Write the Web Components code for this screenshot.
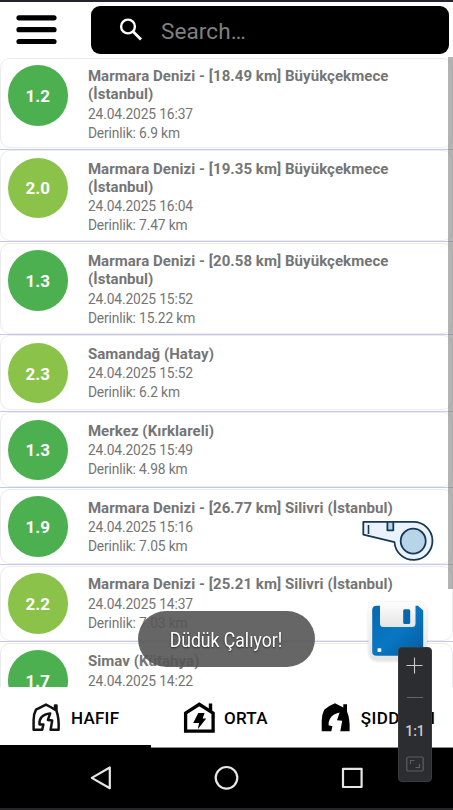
<!DOCTYPE html>
<html lang="tr">
<head>
<meta charset="utf-8">
<title>Depremler</title>
<style>
html,body{margin:0;height:100%;overflow:hidden;background:#fff}
body{font-family:Roboto,"Noto Sans",sans-serif}
</style>
</head>
<body>
<quake-app></quake-app>
<script>
const define = (name, html, init) => customElements.define(name, class extends HTMLElement {
  constructor() {
    super();
    const t = document.createElement('template');
    t.innerHTML = html;
    this.attachShadow({mode: 'open'}).append(t.content.cloneNode(true));
  }
  connectedCallback() { if (init) init(this, this.shadowRoot); }
});

define('top-bar', `<style>
:host{display:flex;box-sizing:border-box;height:57px;border-top:2px solid #25242b;padding:4px 4px 0 16px;background:#fff}
.menu{width:41px;height:48px;margin-right:34px;display:block}
.search{flex:1;height:48px;border-radius:9px;background:#000;display:flex;align-items:center;color:#808080;font-size:22.5px}
.search svg{width:24px;height:24px;margin:0 18px 0 28px}
.search span{position:relative;top:1px;letter-spacing:.1px}
</style>
<svg class="menu" viewBox="0 0 41 48"><path d="M3 11.8H38M3 23.7H38M3 35.5H38" stroke="#000" stroke-width="5.2" stroke-linecap="round"/></svg>
<div class="search"><svg viewBox="0 0 24 24" fill="none" stroke="#fff" stroke-width="2.4"><circle cx="9" cy="8.5" r="6.9"/><path d="M14 13.5L22 21.5" stroke-width="2.8"/></svg><span>Search…</span></div>`);

define('quake-row', `<style>
:host{display:flex;box-sizing:border-box;height:76.8px;border-bottom:1px solid #c3c9e8;padding-top:.6px}
.card{flex:1;box-sizing:border-box;height:75px;border:1.3px solid #ececee;border-radius:10px;display:flex;padding:6.5px 0 0 6.6px}
:host([tall]){height:92.6px}
:host([tall]) .card{height:90.8px}
.badge{flex:none;width:60.5px;height:60.5px;border-radius:50%;background:#4caf50;color:#fff;font-weight:700;font-size:17px;display:flex;align-items:center;justify-content:center;margin-right:19.8px;line-height:1}
.badge span{position:relative;top:1px;letter-spacing:.1px}
:host([lime]) .badge{background:#8bc34a}
.info{color:#757575;font-size:13.8px;line-height:19px;padding-top:2.1px;white-space:nowrap}
.meta{letter-spacing:-.13px}
.title{font-weight:700;font-size:15px;letter-spacing:.06px;line-height:18px;margin-bottom:1.5px;white-space:pre-line}
</style>
<div class="card"><div class="badge"><span><slot name="mag"></slot></span></div><div class="info"><div class="title"><slot></slot></div><div class="meta"><slot name="date"></slot></div><div class="meta"><slot name="depth"></slot></div></div></div>`);

define('quake-list', `<style>
:host{display:block;height:630px;overflow:hidden;position:relative;background:#fff}
.bar{position:absolute;right:0;top:0;width:5px;height:532px;background:rgba(120,120,120,.56)}
</style><div class="rows"></div><div class="bar"></div>`, (el, root) => {
  const data = [
    ['1.2', 'Marmara Denizi - [18.49 km] Büyükçekmece\n(İstanbul)', '16:37', '6.9', 0],
    ['2.0', 'Marmara Denizi - [19.35 km] Büyükçekmece\n(İstanbul)', '16:04', '7.47', 1],
    ['1.3', 'Marmara Denizi - [20.58 km] Büyükçekmece\n(İstanbul)', '15:52', '15.22', 0],
    ['2.3', 'Samandağ (Hatay)', '15:52', '6.2', 1],
    ['1.3', 'Merkez (Kırklareli)', '15:49', '4.98', 0],
    ['1.9', 'Marmara Denizi - [26.77 km] Silivri (İstanbul)', '15:16', '7.05', 0],
    ['2.2', 'Marmara Denizi - [25.21 km] Silivri (İstanbul)', '14:37', '7.03', 1],
    ['1.7', 'Simav (Kütahya)', '14:22', '', 0]
  ];
  root.querySelector('.rows').innerHTML = data.map(([m, t, h, d, lime]) =>
    `<quake-row ${lime ? 'lime' : ''} ${t.includes('\n') ? 'tall' : ''}><span slot="mag">${m}</span>${t}<span slot="date">24.04.2025 ${h}</span>${d ? `<span slot="depth">Derinlik: ${d} km</span>` : ''}</quake-row>`).join('');
});

define('tab-item', `<style>
:host{display:flex;box-sizing:border-box;width:151px;height:61px;align-items:center;border-bottom:1px solid #8c8c8c;font-size:17px;font-weight:500;letter-spacing:.25px;color:#000;white-space:nowrap}
:host([active]){border-bottom:3px solid #000;}
::slotted(svg){width:32px;height:32px;flex:none}
.label{margin-left:9px;position:relative;top:.5px}
:host([active]) .label{top:1.5px}
</style><slot name="icon"></slot><span class="label"><slot></slot></span>`);

define('tab-strip', `<style>
:host{display:flex;height:61px;background:#fff}
.severe{letter-spacing:.4px;margin-left:.8px}
</style>
<tab-item style="padding-left:30px" active><svg slot="icon" viewBox="0 0 32 32" fill="none" stroke="#111" stroke-width="2.5" stroke-linejoin="round"><path d="M3.6 29.8V20Q3.6 14 6 9.6L16 4.6L20.5 7L25 9.6V5.5H26.5V11Q29.2 18 28.6 29.8H20.6L22.2 20.6L17.9 19.9L20.2 13.4Q14.5 13.8 11.6 17Q9 20.2 9.5 24.4H13.4L12.2 29.8Z"/></svg>HAFIF</tab-item>
<tab-item style="padding-left:32px"><svg slot="icon" viewBox="0 0 32 32"><path d="M2.6 30.1V12.2L16.3 3.3L30.1 12.2V30.1Z" fill="none" stroke="#000" stroke-width="3.3"/><path d="M25.8 2.6H29.2V12L25.8 9.5Z"/><path d="M15.3 12H21.6L19.6 17.6H23.2L14.8 28.2L16 22.1H10.2Z"/></svg>ORTA</tab-item>
<tab-item style="padding-left:17px"><svg slot="icon" viewBox="0 0 32 32"><path d="M2.7 30.2V20Q2.7 13.5 5.2 8.7Q10 4.6 16 2.3L24.3 6.4V3.3H28V10.5Q31.2 18 30.6 30.2H21.3L23.2 19.8L18 19.2L20.6 11.6Q13.5 13 11 17.8Q9 21.5 9.6 24.3L13.4 25.2L12.3 30.2Z" fill="#000"/></svg><span class="severe">ŞIDDETLI</span></tab-item>`);

define('nav-bar', `<style>
:host{display:block;height:62px;background:#000;border-bottom:2px solid #25242b;box-sizing:border-box}
svg{display:block}
</style><svg width="453" height="60" viewBox="0 748 453 60" fill="none" stroke="#e6e6e6" stroke-width="2.2" stroke-linejoin="round"><path d="M109.8 767.5V788.2L91.8 777.9Z"/><circle cx="226.5" cy="777.8" r="10.8"/><rect x="343" y="768.8" width="18.6" height="18.2"/></svg>`);

define('toast-message', `<style>
:host{display:flex;align-items:center;justify-content:center;width:177px;height:56px;border-radius:28px;background:rgba(85,85,85,.9);color:#fff;font-size:20px;white-space:nowrap}
span{transform:scaleX(.88);position:relative;top:.5px;left:-.5px;text-shadow:0 1px 2px rgba(0,0,0,.6)}
</style><span><slot></slot></span>`);

define('whistle-button', `<style>:host{display:block;width:73px;height:42px}svg{display:block}</style>
<svg width="73" height="42" viewBox="361 520 73 42" stroke="#163a56" stroke-width="1.8" stroke-linejoin="round"><path d="M363.3 521.9H413.2A19 19 0 1 1 394.5 542.2L363.3 534.6Z" fill="#eaf2fd"/><circle cx="413.2" cy="541.1" r="12.5" fill="#b8d4e9"/><path d="M387.4 521.9H393.3V530.3H387.4Z" fill="#b8d4e9"/><path d="M368.5 525V534" fill="none" stroke-width="1.6"/></svg>`);

define('save-button', `<style>:host{display:block;width:64px;height:66px}svg{display:block}</style>
<svg width="64" height="66" viewBox="366 599 64 66"><defs><linearGradient id="b" x1="0" y1="0" x2="1" y2="1"><stop stop-color="#0968af"/><stop offset=".5" stop-color="#0877c3"/><stop offset="1" stop-color="#055aa0"/></linearGradient><linearGradient id="w" x2="0" y2="1"><stop stop-color="#fcfcfc"/><stop offset="1" stop-color="#e4e4e5"/></linearGradient><filter id="s" x="-10%" y="-10%" width="120%" height="120%"><feDropShadow dx="0" dy=".5" stdDeviation="1" flood-opacity=".18"/></filter></defs><rect x="368.6" y="602" width="58.4" height="58.6" rx="9" fill="url(#w)" filter="url(#s)"/><path d="M377 605.7H418L423.2 610.5V651.5Q423.2 655.8 419 655.8H376.5Q372.2 655.8 372.2 651.5V610Q372.2 605.7 377 605.7Z" fill="url(#b)"/><path d="M380 604.5H415.5V623.5Q415.5 627 412 627H383.5Q380 627 380 623.5Z" fill="url(#w)"/><rect x="403.2" y="609.2" width="7" height="14.8" rx="1.5" fill="#0965ae"/><rect x="377.5" y="648.2" width="3.8" height="3.8" rx=".8" fill="#f5fafc"/></svg>`);

define('zoom-panel', `<style>
:host{display:flex;flex-direction:column;align-items:center;box-sizing:border-box;width:34px;height:135px;border-radius:4px;background:#2c2d31;border:1px solid #3a3b3e;color:#c9cacc;font-size:14px;font-weight:500}
.plus{margin-top:9px;width:18px;height:18px}
.minus{width:16px;height:1px;background:#65666a;margin-top:22px}
.ratio{margin-top:24px;line-height:18px}
.fit{margin-top:16px;width:18px;height:16px}
svg{display:block}
</style><svg class="plus" viewBox="0 0 18 18"><path d="M8.5 .5V16.5M.5 8.5H16.5" stroke="#c9cacc" stroke-width="1.1"/></svg><div class="minus"></div><span class="ratio">1:1</span><svg class="fit" viewBox="0 0 18 16" fill="none" stroke="#5c5d60" stroke-width="1.2"><rect x=".8" y="1" width="16.4" height="14" rx="1.5"/><path d="M4.5 8V4.5H8.5M9.5 11.5H13.5V8"/></svg>`);

define('quake-app', `<style>
:host{display:flex;flex-direction:column;width:453px;height:810px;position:relative;overflow:hidden;background:#fff}
.over{position:absolute}
</style>
<top-bar></top-bar><quake-list></quake-list><tab-strip></tab-strip><nav-bar></nav-bar>
<whistle-button class="over" style="left:361px;top:520px"></whistle-button>
<save-button class="over" style="left:366px;top:599px"></save-button>
<toast-message class="over" style="left:138px;top:611px">Düdük Çalıyor!</toast-message>
<zoom-panel class="over" style="left:398px;top:647px"></zoom-panel>`);
</script>
</body>
</html>
